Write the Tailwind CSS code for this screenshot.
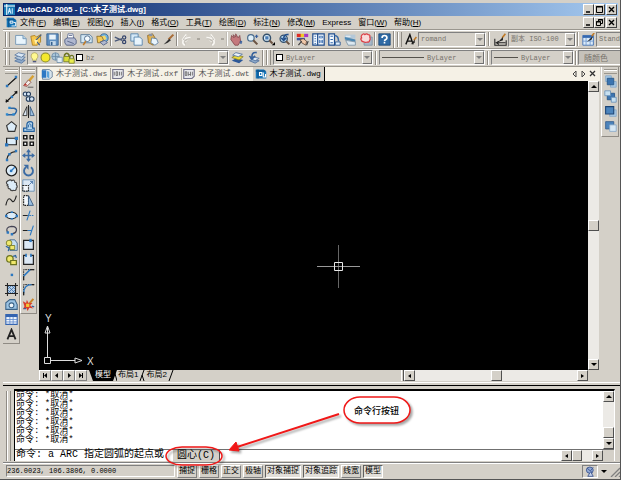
<!DOCTYPE html>
<html lang="zh-CN">
<head>
    <meta charset="UTF-8">
    <meta name="viewport" content="width=device-width, initial-scale=1.0">
    <title>AutoCAD 2005 - [C:\木子测试.dwg]</title>
    <script src="https://cdn.jsdelivr.net/npm/@tailwindcss/browser@4"></script>
</head>
<body class="flex flex-col h-screen min-h-[400px] overflow-hidden bg-[#d4d0c8] border-r border-b border-[#555] pt-[3px] pl-[3px] font-['Liberation_Sans','Noto_Sans_CJK_SC',sans-serif] text-[8px] leading-[10px] text-black">

<!-- Title bar -->
<header class="flex items-center h-[13px] mr-[2px] pl-[1px] pr-[1px] shrink-0 bg-linear-to-r from-[#0a246a] to-[#a6caf0] text-white">
    <svg class="w-[11px] h-[11px] mr-[2px]" viewBox="0 0 16 16"><rect width="16" height="16" fill="#1678b4"/><path d="M0 3h16M4 0v16" stroke="#fff" stroke-width="1.5"/><path d="M6 14l2-8 2 8M12 6v8M6 11h4" stroke="#cfeaff" stroke-width="1.5" fill="none"/></svg>
    <h1 class="font-bold whitespace-nowrap">AutoCAD 2005 - [C:\木子测试.dwg]</h1>
    <div class="flex ml-auto text-black">
        <button aria-label="最小化" class="flex w-[11px] h-[11px] bg-[#d4d0c8] border border-t-white border-l-white border-r-[#404040] border-b-[#404040]"><svg class="w-[9px] h-[9px]" viewBox="0 0 9 9"><path d="M2 7h4" stroke="#000" stroke-width="1.5"/></svg></button>
        <button aria-label="最大化" class="flex w-[11px] h-[11px] bg-[#d4d0c8] border border-t-white border-l-white border-r-[#404040] border-b-[#404040]"><svg class="w-[9px] h-[9px]" viewBox="0 0 9 9"><path d="M1.5 1.5h6v6h-6zM1 2h7" stroke="#000" fill="none"/></svg></button>
        <button aria-label="关闭" class="flex w-[11px] h-[11px] ml-[1px] bg-[#d4d0c8] border border-t-white border-l-white border-r-[#404040] border-b-[#404040]"><svg class="w-[9px] h-[9px]" viewBox="0 0 9 9"><path d="M2 2l5 5M7 2l-5 5" stroke="#000" stroke-width="1.4"/></svg></button>
    </div>
</header>

<!-- Menu -->
<nav class="flex items-center h-[13px] mr-[2px] pl-[3px] pr-[1px] shrink-0 whitespace-nowrap">
    <svg class="w-[11px] h-[11px] mr-[3px]" viewBox="0 0 16 16"><path d="M1 1h10l4 4v10H1z" fill="#1876b8"/><path d="M1 4h13M4 1v14" stroke="#064478"/><path d="M6 6h4v3H6zM11 8h3v5H8" stroke="#fff" fill="none" stroke-width="1.3"/></svg>
    <div class="flex gap-[7px]">
        <a href="#">文件(<u>F</u>)</a>
        <a href="#">编辑(<u>E</u>)</a>
        <a href="#">视图(<u>V</u>)</a>
        <a href="#">插入(<u>I</u>)</a>
        <a href="#">格式(<u>O</u>)</a>
        <a href="#">工具(<u>T</u>)</a>
        <a href="#">绘图(<u>D</u>)</a>
        <a href="#">标注(<u>N</u>)</a>
        <a href="#">修改(<u>M</u>)</a>
        <a href="#">Express</a>
        <a href="#">窗口(<u>W</u>)</a>
        <a href="#">帮助(<u>H</u>)</a>
    </div>
    <div class="flex ml-auto">
        <button aria-label="最小化图形" class="flex w-[11px] h-[11px] bg-[#d4d0c8] border border-t-white border-l-white border-r-[#404040] border-b-[#404040]"><svg class="w-[9px] h-[9px]" viewBox="0 0 9 9"><path d="M2 7h4" stroke="#000" stroke-width="1.5"/></svg></button>
        <button aria-label="还原图形" class="flex w-[11px] h-[11px] bg-[#d4d0c8] border border-t-white border-l-white border-r-[#404040] border-b-[#404040]"><svg class="w-[9px] h-[9px]" viewBox="0 0 9 9"><path d="M3.5 3V1.5h4v4H6M1.5 3.5h4v4h-4zM1 4h5M3 2h5" stroke="#000" fill="none"/></svg></button>
        <button aria-label="关闭图形" class="flex w-[11px] h-[11px] ml-[1px] bg-[#d4d0c8] border border-t-white border-l-white border-r-[#404040] border-b-[#404040]"><svg class="w-[9px] h-[9px]" viewBox="0 0 9 9"><path d="M2 2l5 5M7 2l-5 5" stroke="#000" stroke-width="1.4"/></svg></button>
    </div>
</nav>

<!-- Standard and styles toolbars -->
<div class="flex items-center h-[19px] shrink-0 overflow-hidden border-t border-[#9a968e] shadow-[inset_0_1px_0_#fff]">
    <span class="w-[5px] h-[15px] mx-[2px] shrink-0 border-x border-[#8f8b84] shadow-[inset_1px_0_0_#fff]"></span>
    <button aria-label="新建" class="flex w-4 shrink-0 justify-center"><svg class="w-[13px] h-[13px]" viewBox="0 0 16 16"><path d="M2 3h9l4 4v7H2z" fill="#e8f4fc" stroke="#6a8fb0"/><path d="M11 3v4h4" fill="#b8d4e8" stroke="#6a8fb0"/></svg></button>
    <button aria-label="打开" class="flex w-4 shrink-0 justify-center"><svg class="w-[13px] h-[13px]" viewBox="0 0 16 16"><path d="M1 4l5-1 2 2 5-3v9l-4 4H3z" fill="#f6c64c" stroke="#a87a1c"/><path d="M7 9l7-7M7 9l5 6" stroke="#44618a" stroke-width="1.5"/><path d="M5 8l5 1-3 5z" fill="#fff0a8"/></svg></button>
    <button aria-label="保存" class="flex w-4 shrink-0 justify-center"><svg class="w-[13px] h-[13px]" viewBox="0 0 16 16"><path d="M1 1h14v14H1z" fill="#5f8fc0" stroke="#34608f"/><path d="M4 2h8v6H4z" fill="#e8f2fa"/><path d="M5 10h7v5H5z" fill="#c4d8ea"/><path d="M6 11h2v4H6z" fill="#34608f"/></svg></button>
    <span class="w-[2px] h-[14px] shrink-0 border-l border-[#8f8b84] border-r border-r-white"></span>
    <button aria-label="打印" class="flex w-4 shrink-0 justify-center"><svg class="w-[13px] h-[13px]" viewBox="0 0 16 16"><path d="M4 7l1-6h6l1 6" fill="#fff" stroke="#5b6c92"/><path d="M1 8l3-2h9l2 3v4l-3 2H3l-2-3z" fill="#b0b8d0" stroke="#4b5a80"/><path d="M4 10l8 3M6 3h4" stroke="#4b5a80"/></svg></button>
    <button aria-label="打印预览" class="flex w-4 shrink-0 justify-center"><svg class="w-[13px] h-[13px]" viewBox="0 0 16 16"><path d="M1 2h11l3 3v7H1z" fill="#d5e8f4" stroke="#4d7294"/><circle cx="9" cy="7" r="3.5" fill="#f4fbff" stroke="#3c5a7c"/><path d="M7 10l-3 5" stroke="#c07b2a" stroke-width="2"/></svg></button>
    <button aria-label="发布" class="flex w-4 shrink-0 justify-center"><svg class="w-[13px] h-[13px]" viewBox="0 0 16 16"><circle cx="10" cy="6" r="5" fill="#72b4e2" stroke="#32618c"/><path d="M7 4l4-1 2 4-3 2z" fill="#f2d868"/><path d="M1 4h6l2 4-2 4H2z" fill="#f2c958" stroke="#8c6a24"/><path d="M5 11l6-2 3 3-5 3z" fill="#b0b8d0" stroke="#4b5a80"/></svg></button>
    <span class="w-[2px] h-[14px] shrink-0 border-l border-[#8f8b84] border-r border-r-white"></span>
    <button aria-label="剪切" class="flex w-4 shrink-0 justify-center"><svg class="w-[13px] h-[13px]" viewBox="0 0 16 16"><path d="M1 5l9 4M1 10l9-3" stroke="#4a5878" stroke-width="1.6"/><circle cx="12.5" cy="5.5" r="2" fill="none" stroke="#34446c" stroke-width="1.5"/><circle cx="12.5" cy="11" r="2" fill="none" stroke="#34446c" stroke-width="1.5"/></svg></button>
    <button aria-label="复制" class="flex w-4 shrink-0 justify-center"><svg class="w-[13px] h-[13px]" viewBox="0 0 16 16"><path d="M1 1h9v9H1z" fill="#d4e8f6" stroke="#4b7ca8"/><path d="M5 5h7l3 3v7H5z" fill="#e8f4fc" stroke="#4b7ca8"/></svg></button>
    <button aria-label="粘贴" class="flex w-4 shrink-0 justify-center"><svg class="w-[13px] h-[13px]" viewBox="0 0 16 16"><path d="M2 3l6-2 5 8-4 6-6-3z" fill="#e6b450" stroke="#8c6420"/><path d="M4 1h4v3H4z" fill="#8894a8"/><path d="M7 6l6 1 2 5-4 3-5-3z" fill="#e8f4fc" stroke="#5a7ca0"/></svg></button>
    <button aria-label="特性匹配" class="flex w-4 shrink-0 justify-center"><svg class="w-[13px] h-[13px]" viewBox="0 0 16 16"><path d="M14 2L8 8" stroke="#a86c38" stroke-width="2.5"/><path d="M9 7L2 14l5-2 4-3z" fill="#303030"/></svg></button>
    <span class="w-[2px] h-[14px] shrink-0 border-l border-[#8f8b84] border-r border-r-white"></span>
    <button aria-label="放弃" class="flex w-4 shrink-0 justify-center"><svg class="w-[13px] h-[13px]" viewBox="0 0 16 16"><path d="M6 15C1 11 5 6 13 6M3 9l5-7M3 8l6 2" fill="none" stroke="#f8f6f2" stroke-width="2.5"/><path d="M7 14C3 11 6 7 13 7M8 3L4 8l5 2" fill="none" stroke="#b4b0a8"/></svg></button>
    <span class="flex w-2 shrink-0 justify-center"><span class="w-[3px] h-[2px] bg-[#aaa69e]"></span></span>
    <button aria-label="重做" class="flex w-4 shrink-0 justify-center"><svg class="w-[13px] h-[13px]" viewBox="0 0 16 16"><path d="M10 15c5-4 1-9-7-9M13 9L8 2M13 8l-6 2" fill="none" stroke="#f8f6f2" stroke-width="2.5"/><path d="M9 14c4-3 1-7-6-7M8 3l4 5-5 2" fill="none" stroke="#b4b0a8"/></svg></button>
    <span class="flex w-2 shrink-0 justify-center"><span class="w-[3px] h-[2px] bg-[#aaa69e]"></span></span>
    <span class="w-[2px] h-[14px] shrink-0 border-l border-[#c0bcb4] border-r border-r-white"></span>
    <button aria-label="实时平移" class="flex w-4 shrink-0 justify-center"><svg class="w-[13px] h-[13px]" viewBox="0 0 16 16"><path d="M2 3l3 3-1-4 3 3V1l3 5 2-3 1 7-3 5H6L1 8z" fill="#c4787c" stroke="#84484c"/><path d="M12 11h3M13.5 9.5v4" stroke="#335c9c" stroke-width="1.5"/></svg></button>
    <button aria-label="实时缩放" class="flex w-4 shrink-0 justify-center"><svg class="w-[13px] h-[13px]" viewBox="0 0 16 16"><circle cx="6" cy="6" r="4" fill="#e0f0fa" stroke="#4b6c8c" stroke-width="1.5"/><path d="M9 9l5 5" stroke="#6b5444" stroke-width="2.5"/><path d="M11 4h4M13 2v4" stroke="#335c9c" stroke-width="1.5"/></svg></button>
    <button aria-label="窗口缩放" class="flex w-4 shrink-0 justify-center"><svg class="w-[13px] h-[13px]" viewBox="0 0 16 16"><circle cx="6" cy="6" r="4.5" fill="#e0f0fa" stroke="#34506c" stroke-width="1.8"/><path d="M4 4h4v4H4z" fill="#4a7cb4"/><path d="M9 9l4 4" stroke="#6b5444" stroke-width="2.5"/><path d="M12 15h4v-4z" fill="#000"/></svg></button>
    <button aria-label="缩放上一个" class="flex w-4 shrink-0 justify-center"><svg class="w-[13px] h-[13px]" viewBox="0 0 16 16"><circle cx="7" cy="7" r="4.5" fill="#b8d8f0" stroke="#34506c" stroke-width="1.5"/><path d="M13 2C9 1 7 4 7 7M4 6l3 3 3-3" fill="none" stroke="#24508c" stroke-width="2"/><path d="M10 10l4 4" stroke="#6b5444" stroke-width="2.5"/></svg></button>
    <span class="w-[2px] h-[14px] shrink-0 border-l border-[#8f8b84] border-r border-r-white"></span>
    <button aria-label="特性" class="flex w-4 shrink-0 justify-center"><svg class="w-[13px] h-[13px]" viewBox="0 0 16 16"><path d="M1 1h5v4H1z" fill="#e02c24"/><path d="M6 1h4v4H6z" fill="#f0c828"/><path d="M10 1h5v4h-5z" fill="#a838c4"/><path d="M1 6h10v3H1z" fill="#3c58a0"/><path d="M5 8l4-1 4 3-1 5-5-3z" fill="#f0c8a8" stroke="#5c4438"/><path d="M3 15l4-5M13 15l2-5" stroke="#444" stroke-width="1.5"/></svg></button>
    <button aria-label="设计中心" class="flex w-4 shrink-0 justify-center"><svg class="w-[13px] h-[13px]" viewBox="0 0 16 16"><path d="M1 1h14v14H1z" fill="#f4faff" stroke="#1e4c8c" stroke-width="1.5"/><path d="M7 1v14" stroke="#1e4c8c" stroke-width="1.5"/><path d="M3 4h2M3 7h2M3 10h2M3 13h2M9 4h4v2H9zM9 9h1v3H9zM12 9h1v3h-1z" stroke="#2c64ac" fill="none"/></svg></button>
    <button aria-label="工具选项板" class="flex w-4 shrink-0 justify-center"><svg class="w-[13px] h-[13px]" viewBox="0 0 16 16"><path d="M1 1h7v14H1z" fill="#f4faff" stroke="#1e4c8c" stroke-width="1.5"/><path d="M3 4h3M3 8h3M3 12h3" stroke="#2c64ac" stroke-width="1.5"/><path d="M8 3c4 0 5 3 5 7" stroke="#3c6ca8" stroke-width="2" fill="none"/><path d="M9 11h6v4H9z" fill="#e0eef8" stroke="#1e4c8c"/></svg></button>
    <button aria-label="图纸集管理器" class="flex w-4 shrink-0 justify-center"><svg class="w-[13px] h-[13px]" viewBox="0 0 16 16"><path d="M1 2h13v5H1z" fill="#b4c8d8"/><path d="M1 5l13 3v3L1 8z" fill="#4c88b4"/><path d="M2 9l12 2v4H5z" fill="#dce8f0" stroke="#7890a4"/><path d="M2 4h6" stroke="#fff"/></svg></button>
    <button aria-label="标记集管理器" class="flex w-4 shrink-0 justify-center"><svg class="w-[13px] h-[13px]" viewBox="0 0 16 16"><path d="M5 5h10v10H5z" fill="#a8b8c8" stroke="#7890a4"/><path d="M2 3q2-3 4-1 2-2 4 0 3 0 2 3 1 2 0 4-1 3-3 2-2 1-4 0-3 0-3-2-2-2 0-3-1-2 0-3z" fill="#f8dcdc" stroke="#dc3c44" stroke-width="1.5"/></svg></button>
    <span class="w-[2px] h-[14px] shrink-0 border-l border-[#8f8b84] border-r border-r-white"></span>
    <button aria-label="帮助" class="flex w-4 shrink-0 justify-center"><svg class="w-[13px] h-[13px]" viewBox="0 0 16 16"><path d="M1 1h14v14H1z" fill="#2f6aa4" stroke="#1b4674"/><path d="M5 6c0-4 6-4 6 0 0 2-3 2-3 4M8 11v2" fill="none" stroke="#fff" stroke-width="2"/></svg></button>
    <span class="w-[2px] h-[17px] ml-[1px] shrink-0 border-l border-[#8f8b84] border-r border-r-white"></span>
    <span class="w-[5px] h-[15px] mx-[2px] shrink-0 border-x border-[#8f8b84] shadow-[inset_1px_0_0_#fff]"></span>
    <button aria-label="文字样式" class="flex w-[14px] shrink-0 justify-center"><svg class="w-[13px] h-[13px]" viewBox="0 0 16 16"><path d="M1 14L6 2l4 12M3 10h6" stroke="#111" stroke-width="1.7" fill="none"/><path d="M14 5l-3 4" stroke="#c07b2a" stroke-width="2"/><path d="M12 8l-5 6 5-2z" fill="#222"/></svg></button>
    <label class="flex w-[68px] h-[15px] shrink-0 border border-t-[#808080] border-l-[#808080] border-r-white border-b-white pl-[2px]">
        <select aria-label="文字样式控制" class="appearance-none flex-1 min-w-0 font-['Liberation_Mono','Noto_Sans_CJK_SC',monospace] text-[7px] text-[#77736c]"><option>romand</option></select>
        <span class="flex items-center justify-center w-[10px] pointer-events-none border border-t-white border-l-white border-r-[#707070] border-b-[#707070]"><span class="border-x-[3px] border-t-[3px] border-x-transparent border-t-[#808080]"></span></span>
    </label>
    <span class="w-[2px] h-[14px] mx-[2px] shrink-0 border-l border-[#8f8b84] border-r border-r-white"></span>
    <button aria-label="标注样式" class="flex w-4 shrink-0 justify-center"><svg class="w-[13px] h-[13px]" viewBox="0 0 16 16"><path d="M1 7v8h14V9M2 12h12M3 12l3-2M3 12l3 2" stroke="#222" stroke-width="1.3" fill="none"/><path d="M14 1l-4 5" stroke="#c07b2a" stroke-width="2"/><path d="M11 5l-6 6 6-2z" fill="#222"/></svg></button>
    <label class="flex w-[68px] h-[15px] shrink-0 border border-t-[#808080] border-l-[#808080] border-r-white border-b-white pl-[2px]">
        <select aria-label="标注样式控制" class="appearance-none flex-1 min-w-0 font-['Liberation_Mono','Noto_Sans_CJK_SC',monospace] text-[7px] text-[#77736c]"><option>副本 ISO-100</option></select>
        <span class="flex items-center justify-center w-[10px] pointer-events-none border border-t-white border-l-white border-r-[#707070] border-b-[#707070]"><span class="border-x-[3px] border-t-[3px] border-x-transparent border-t-[#808080]"></span></span>
    </label>
    <span class="w-[2px] h-[14px] mx-[1px] shrink-0 border-l border-[#8f8b84] border-r border-r-white"></span>
    <button aria-label="表格样式" class="flex w-4 shrink-0 justify-center"><svg class="w-[13px] h-[13px]" viewBox="0 0 16 16"><path d="M1 3h13v12H1z" fill="#dcebf8" stroke="#3468b0"/><path d="M1 3h13v3H1z" fill="#3468b0"/><path d="M1 10h13M5 6v9M10 6v9" stroke="#6c98d0"/><path d="M15 0l-3 4" stroke="#c07b2a" stroke-width="2"/><path d="M13 4l-7 7 6-3z" fill="#222"/></svg></button>
    <label class="flex flex-1 min-w-[66px] h-[15px] border border-t-[#808080] border-l-[#808080] border-r-white border-b-white pl-[2px]">
        <select aria-label="表格样式控制" class="appearance-none flex-1 min-w-0 font-['Liberation_Mono','Noto_Sans_CJK_SC',monospace] text-[7px] text-[#77736c]"><option>Standard</option></select>
        <span class="flex items-center justify-center w-[10px] pointer-events-none border border-t-white border-l-white border-r-[#707070] border-b-[#707070]"><span class="border-x-[3px] border-t-[3px] border-x-transparent border-t-[#808080]"></span></span>
    </label>
</div>

<!-- Layers and properties toolbars -->
<div class="flex items-center h-[18px] shrink-0 overflow-hidden border-t border-[#9a968e] shadow-[inset_0_1px_0_#fff]">
    <span class="w-[5px] h-[15px] mx-[2px] shrink-0 border-x border-[#8f8b84] shadow-[inset_1px_0_0_#fff]"></span>
    <button aria-label="图层特性管理器" class="flex w-[15px] shrink-0 justify-center"><svg class="w-[12px] h-[12px]" viewBox="0 0 16 16"><path d="M1 12l5-3 9 2-5 4z" fill="#8ca8c8" stroke="#50709c"/><path d="M1 8l5-3 9 2-5 4z" fill="#b4c8dc" stroke="#50709c"/><path d="M1 4l5-3 9 2-5 4z" fill="#dce8f4" stroke="#50709c"/></svg></button>
    <label class="flex items-center w-[202px] h-[15px] shrink-0 border border-t-[#808080] border-l-[#808080] border-r-white border-b-white pl-[1px]">
        <svg class="w-[11px] h-[11px]" viewBox="0 0 16 16"><path d="M8 1a5 5 0 0 0-3 9v2h6v-2a5 5 0 0 0-3-9z" fill="#fff890" stroke="#a49c50"/><path d="M5.5 13h5v2h-5z" fill="#505880"/></svg>
        <svg class="w-[11px] h-[11px]" viewBox="0 0 16 16"><circle cx="8" cy="8" r="6.5" fill="#f4e82c" stroke="#8c8c28" stroke-width="1.5"/></svg>
        <svg class="w-[12px] h-[12px]" viewBox="0 0 16 16"><circle cx="6" cy="6" r="5" fill="#a8c4d8" stroke="#6888a4"/><path d="M8 7h7v7H8z" fill="#e0ecf4" stroke="#6888a4"/><path d="M1 6h10M6 1v10" stroke="#6888a4"/></svg>
        <svg class="w-[12px] h-[12px]" viewBox="0 0 16 16"><path d="M2 6V4q3-5 6 0v3" fill="none" stroke="#6c7420" stroke-width="2"/><path d="M1 6h8v7H1z" fill="#d8dc38" stroke="#6c7420"/><path d="M9 8V6q3-3 5 0v3" fill="none" stroke="#6c7420" stroke-width="1.5"/><path d="M8 9h7v6H8z" fill="#e8ec50" stroke="#6c7420"/></svg>
        <span class="w-[7px] h-[7px] ml-[1px] bg-white border border-black"></span>
        <select aria-label="图层控制" class="appearance-none flex-1 min-w-0 ml-[3px] font-['Liberation_Mono',monospace] text-[7px] text-[#77736c]"><option>bz</option></select>
        <span class="flex items-center justify-center w-[10px] h-full pointer-events-none border border-t-white border-l-white border-r-[#707070] border-b-[#707070]"><span class="border-x-[3px] border-t-[3px] border-x-transparent border-t-[#808080]"></span></span>
    </label>
    <button aria-label="将对象的图层置为当前" class="flex w-4 shrink-0 justify-center"><svg class="w-[13px] h-[13px]" viewBox="0 0 16 16"><path d="M1 12l5-3 9 2-5 4z" fill="#2c5898"/><path d="M1 8l5-3 9 2-5 4z" fill="#ecdc3c" stroke="#88802c"/><path d="M2 5l4-3 8 2-5 3z" fill="#e8f0f8" stroke="#50709c"/></svg></button>
    <button aria-label="上一个图层" class="flex w-4 shrink-0 justify-center"><svg class="w-[13px] h-[13px]" viewBox="0 0 16 16"><path d="M3 12l4-2 8 2-5 3z" fill="#8ca8c8" stroke="#50709c"/><path d="M4 9l3-2 8 2-5 3z" fill="#dce8f4" stroke="#50709c"/><path d="M12 2C7 1 6 4 6 8M3 6l3 4 4-4" fill="none" stroke="#34609c" stroke-width="2"/></svg></button>
    <span class="w-[2px] h-[16px] ml-[1px] shrink-0 border-l border-[#8f8b84] border-r border-r-white"></span>
    <span class="w-[5px] h-[15px] mx-[2px] shrink-0 border-x border-[#8f8b84] shadow-[inset_1px_0_0_#fff]"></span>
    <label class="flex items-center w-[100px] h-[15px] shrink-0 border border-t-[#808080] border-l-[#808080] border-r-white border-b-white pl-[2px]">
        <span class="w-[7px] h-[7px] bg-white border border-black"></span>
        <select aria-label="颜色控制" class="appearance-none flex-1 min-w-0 ml-[3px] font-['Liberation_Mono',monospace] text-[7px] text-[#77736c]"><option>ByLayer</option></select>
        <span class="flex items-center justify-center w-[10px] h-full pointer-events-none border border-t-white border-l-white border-r-[#707070] border-b-[#707070]"><span class="border-x-[3px] border-t-[3px] border-x-transparent border-t-[#808080]"></span></span>
    </label>
    <span class="w-[2px] h-[14px] mx-[2px] shrink-0 border-l border-[#8f8b84] border-r border-r-white"></span>
    <label class="flex items-center w-[106px] h-[15px] shrink-0 border border-t-[#808080] border-l-[#808080] border-r-white border-b-white pl-[2px]">
        <span class="w-[42px] h-px bg-[#55524c]"></span>
        <select aria-label="线型控制" class="appearance-none flex-1 min-w-0 ml-[3px] font-['Liberation_Mono',monospace] text-[7px] text-[#77736c]"><option>ByLayer</option></select>
        <span class="flex items-center justify-center w-[10px] h-full pointer-events-none border border-t-white border-l-white border-r-[#707070] border-b-[#707070]"><span class="border-x-[3px] border-t-[3px] border-x-transparent border-t-[#808080]"></span></span>
    </label>
    <span class="w-[2px] h-[14px] mx-[2px] shrink-0 border-l border-[#8f8b84] border-r border-r-white"></span>
    <label class="flex items-center w-[83px] h-[15px] shrink-0 border border-t-[#808080] border-l-[#808080] border-r-white border-b-white pl-[2px]">
        <span class="w-[24px] h-px bg-[#55524c]"></span>
        <select aria-label="线宽控制" class="appearance-none flex-1 min-w-0 ml-[3px] font-['Liberation_Mono',monospace] text-[7px] text-[#77736c]"><option>ByLayer</option></select>
        <span class="flex items-center justify-center w-[10px] h-full pointer-events-none border border-t-white border-l-white border-r-[#707070] border-b-[#707070]"><span class="border-x-[3px] border-t-[3px] border-x-transparent border-t-[#808080]"></span></span>
    </label>
    <span class="w-[2px] h-[14px] mx-[1px] shrink-0 border-l border-[#8f8b84] border-r border-r-white"></span>
    <label class="flex flex-1 min-w-[80px] h-[15px] bg-[#c6c2ba] border border-t-[#808080] border-l-[#808080] border-r-white border-b-white pl-[5px]">
        <select aria-label="打印样式控制" disabled class="appearance-none flex-1 min-w-0 font-['Noto_Sans_CJK_SC',sans-serif] text-[#77736c] opacity-100"><option>随颜色</option></select>
    </label>
</div>

<!-- Work area -->
<main class="flex flex-1 min-h-0 border-t border-[#9a968e]">
    <!-- Draw -->
    <div class="flex flex-col items-center w-[17px] shrink-0 self-start border-r border-b border-[#8f8b84] pt-[2px] pb-[2px]">
        <span class="w-[13px] h-[5px] mb-[1px] border-y border-[#9a968e] shadow-[inset_0_1px_0_#fff]"></span>
        <div class="flex flex-col justify-between items-center h-[266px]">
            <button aria-label="直线" class="flex"><svg class="w-[13px] h-[13px]" viewBox="0 0 16 16"><path d="M2 14L14 3" stroke="#111" stroke-width="1.5"/><path d="M1 12h3v3H1zM12 1h3v3h-3z" fill="#2c78c0"/></svg></button>
            <button aria-label="构造线" class="flex"><svg class="w-[13px] h-[13px]" viewBox="0 0 16 16"><path d="M1 15L15 2" stroke="#111" stroke-width="1.5"/><path d="M1 15v-4l4 3zM15 1v4l-4-3z" fill="#111"/><path d="M7 7h3v3H7z" fill="#2c78c0"/></svg></button>
            <button aria-label="多段线" class="flex"><svg class="w-[13px] h-[13px]" viewBox="0 0 16 16"><path d="M6 4h5q4 1 3 4t-3 4H2" fill="none" stroke="#2c64a0" stroke-width="1.8"/><path d="M4 2h3v3H4zM1 10h3v3H1zM9 10h3v3H9z" fill="#2c88d0"/></svg></button>
            <button aria-label="正多边形" class="flex"><svg class="w-[13px] h-[13px]" viewBox="0 0 16 16"><path d="M8 2l6 5-2 7H4L2 7z" fill="#dcecf8" stroke="#333" stroke-width="1.4"/></svg></button>
            <button aria-label="矩形" class="flex"><svg class="w-[13px] h-[13px]" viewBox="0 0 16 16"><path d="M2 4h12v8H2z" fill="#dcecf8" stroke="#222" stroke-width="1.5"/><path d="M0 10h4v4H0zM12 2h4v4h-4z" fill="#2c78c0"/></svg></button>
            <button aria-label="圆弧" class="flex"><svg class="w-[13px] h-[13px]" viewBox="0 0 16 16"><path d="M2 14Q3 4 14 3" fill="none" stroke="#222" stroke-width="1.5"/><path d="M1 12h3v3H1zM4 5h3v3H4zM12 1h3v3h-3z" fill="#2c78c0"/></svg></button>
            <button aria-label="圆" class="flex"><svg class="w-[13px] h-[13px]" viewBox="0 0 16 16"><circle cx="8" cy="8" r="6.5" fill="#dcecf8" stroke="#222" stroke-width="1.5"/><path d="M8 8l4-4" stroke="#2c78c0" stroke-width="1.5"/><path d="M6 7h3v3H6z" fill="#2c78c0"/></svg></button>
            <button aria-label="修订云线" class="flex"><svg class="w-[13px] h-[13px]" viewBox="0 0 16 16"><path d="M3 7Q0 4 4 2q3-2 4 0 4-2 4 2 3 0 2 3 2 3 0 4 0 4-4 3-3 1-4-2-3 0-2-3-3-1 0-2z" fill="#dcecf8" stroke="#444" stroke-width="1.4"/></svg></button>
            <button aria-label="样条曲线" class="flex"><svg class="w-[13px] h-[13px]" viewBox="0 0 16 16"><path d="M1 14C4 0 8 8 9 9s3 1 5-7" fill="none" stroke="#222" stroke-width="1.4"/></svg></button>
            <button aria-label="椭圆" class="flex"><svg class="w-[13px] h-[13px]" viewBox="0 0 16 16"><ellipse cx="8" cy="8" rx="6.5" ry="4" fill="#dcecf8" stroke="#222" stroke-width="1.4"/><path d="M0 7h3v3H0zM13 7h3v3h-3zM7 3h3v2H7zM7 11h3v2H7z" fill="#2c78c0"/></svg></button>
            <button aria-label="椭圆弧" class="flex"><svg class="w-[13px] h-[13px]" viewBox="0 0 16 16"><path d="M3 10Q0 4 8 3q7 0 6 5-1 4-6 4" fill="none" stroke="#445" stroke-width="1.5"/><path d="M2 9h3v3H2zM7 11h3v3H7z" fill="#2c78c0"/></svg></button>
            <button aria-label="插入块" class="flex"><svg class="w-[13px] h-[13px]" viewBox="0 0 16 16"><path d="M6 1h6l3 4v9H6z" fill="#c8e0f0" stroke="#345c84"/><circle cx="5" cy="5" r="3.5" fill="#f0e86c" stroke="#6c7420"/><path d="M6 8h6v5H6z" fill="#f0e86c" stroke="#6c7420"/><path d="M1 9l4 2-1 4" stroke="#2c64a0" fill="none" stroke-width="1.5"/></svg></button>
            <button aria-label="创建块" class="flex"><svg class="w-[13px] h-[13px]" viewBox="0 0 16 16"><circle cx="6" cy="6" r="4" fill="#f0e86c" stroke="#6c7420" stroke-width="1.5"/><path d="M7 8h7v5H7z" fill="#f0e86c" stroke="#6c7420" stroke-width="1.5"/><path d="M10 3l3-1 1 3" stroke="#2c64a0" fill="none" stroke-width="1.5"/></svg></button>
            <button aria-label="点" class="flex"><svg class="w-[13px] h-[13px]" viewBox="0 0 16 16"><path d="M7 7h3v3H7z" fill="#2c78c0"/></svg></button>
            <button aria-label="图案填充" class="flex"><svg class="w-[13px] h-[13px]" viewBox="0 0 16 16"><path d="M3 3h10v10H3z" fill="#b8d0e8"/><path d="M3 8l5-5M3 13L13 3M8 13l5-5M3 8l5 5M3 3l10 10M8 3l5 5" stroke="#3c6ca4"/><path d="M3 0v16M13 0v16M0 3h16M0 13h16" stroke="#222" stroke-width="1.3"/></svg></button>
            <button aria-label="面域" class="flex"><svg class="w-[13px] h-[13px]" viewBox="0 0 16 16"><path d="M1 14V6l5-4h6l3 6v6z" fill="#9cc4e4" stroke="#3c6488" stroke-width="1.3"/><circle cx="8" cy="9" r="3" fill="#f0f8fc" stroke="#3c6488" stroke-width="1.3"/></svg></button>
            <button aria-label="表格" class="flex"><svg class="w-[13px] h-[13px]" viewBox="0 0 16 16"><path d="M1 2h14v12H1z" fill="#f0f6fc" stroke="#3464b0" stroke-width="1.3"/><path d="M1 2h14v3H1z" fill="#3464b0"/><path d="M1 8h14M1 11h14M6 5v9M10 5v9" stroke="#5c88cc"/></svg></button>
            <button aria-label="多行文字" class="flex"><svg class="w-[13px] h-[13px]" viewBox="0 0 16 16"><path d="M3 14L8 2l5 12M5 10h6" fill="none" stroke="#222" stroke-width="2.2"/></svg></button>
        </div>
    </div>
    <!-- Modify -->
    <div class="flex flex-col items-center w-[17px] mr-[1px] shrink-0 self-start border-l border-l-white border-r border-b border-[#8f8b84] pt-[2px] pb-[2px]">
        <span class="w-[13px] h-[5px] mb-[1px] border-y border-[#9a968e] shadow-[inset_0_1px_0_#fff]"></span>
        <div class="flex flex-col justify-between items-center h-[236px]">
            <button aria-label="删除" class="flex"><svg class="w-[13px] h-[13px]" viewBox="0 0 16 16"><path d="M14 1L8 8" stroke="#d8a030" stroke-width="3"/><path d="M8 6l3 3-5 5-4-1z" fill="#f4ece8" stroke="#804840"/><path d="M2 13l2-3 3 3z" fill="#c43c34"/><path d="M7 15h7" stroke="#444"/></svg></button>
            <button aria-label="复制对象" class="flex"><svg class="w-[13px] h-[13px]" viewBox="0 0 16 16"><circle cx="4" cy="5" r="2.5" fill="#d4e4f4" stroke="#223c5c" stroke-width="1.3"/><circle cx="8" cy="5" r="2.5" fill="#d4e4f4" stroke="#223c5c" stroke-width="1.3"/><circle cx="8" cy="11" r="2.8" fill="#d4e4f4" stroke="#223c5c" stroke-width="1.3"/><circle cx="12" cy="11" r="2.8" fill="#d4e4f4" stroke="#223c5c" stroke-width="1.3"/></svg></button>
            <button aria-label="镜像" class="flex"><svg class="w-[13px] h-[13px]" viewBox="0 0 16 16"><path d="M6 2v11H1z" fill="#dce8f4" stroke="#222"/><path d="M10 2v11h5z" fill="#9cc0e0" stroke="#2c5078"/><path d="M8 0v16" stroke="#222" stroke-width="1.3"/></svg></button>
            <button aria-label="偏移" class="flex"><svg class="w-[13px] h-[13px]" viewBox="0 0 16 16"><path d="M2 14v-4h4V6q0-4 4-4t3 4v4h2v4z" fill="#b8d8f0" stroke="#24609c" stroke-width="1.5"/><path d="M5 12h8M8 9V6q2-3 3 0v3" fill="none" stroke="#24609c"/></svg></button>
            <button aria-label="阵列" class="flex"><svg class="w-[13px] h-[13px]" viewBox="0 0 16 16"><path d="M2 2h4v4H2zM10 2h4v4h-4zM2 10h4v4H2zM10 10h4v4h-4z" fill="#fff" stroke="#111" stroke-width="1.7"/></svg></button>
            <button aria-label="移动" class="flex"><svg class="w-[13px] h-[13px]" viewBox="0 0 16 16"><path d="M8 2v12M2 8h12" stroke="#3c6ca4" stroke-width="2"/><path d="M8 0l3 4H5zM8 16l3-4H5zM0 8l4-3v6zM16 8l-4-3v6z" fill="#3c6ca4"/></svg></button>
            <button aria-label="旋转" class="flex"><svg class="w-[13px] h-[13px]" viewBox="0 0 16 16"><path d="M5 4a5.5 5.5 0 1 0 6 0" fill="none" stroke="#3c6ca4" stroke-width="2.3"/><path d="M2 1h6v6z" fill="#3c6ca4"/></svg></button>
            <button aria-label="缩放" class="flex"><svg class="w-[13px] h-[13px]" viewBox="0 0 16 16"><path d="M1 1h14v14H1z" fill="#dce8f4" stroke="#5c88b0"/><path d="M1 8h7v7H1z" fill="#f4f8fc" stroke="#222" stroke-width="1.4" stroke-dasharray="2 1"/><path d="M9 7l4-4M10 3h3v3" stroke="#3c6ca4" fill="none"/></svg></button>
            <button aria-label="拉伸" class="flex"><svg class="w-[13px] h-[13px]" viewBox="0 0 16 16"><path d="M2 2h6v12H2z" fill="#f4f8fc" stroke="#222" stroke-width="1.4" stroke-dasharray="2 1"/><path d="M8 2l6 12H8z" fill="#9cc0e0" stroke="#2c5078"/></svg></button>
            <button aria-label="修剪" class="flex"><svg class="w-[13px] h-[13px]" viewBox="0 0 16 16"><path d="M10 2L6 14" stroke="#2c78c0" stroke-width="1.4"/><path d="M1 8h6" stroke="#222" stroke-width="1.3"/><path d="M9 8h6" stroke="#2c78c0" stroke-width="1.3" stroke-dasharray="2 1"/></svg></button>
            <button aria-label="延伸" class="flex"><svg class="w-[13px] h-[13px]" viewBox="0 0 16 16"><path d="M14 2l-4 12" stroke="#2c78c0" stroke-width="1.4"/><path d="M1 8h6" stroke="#222" stroke-width="1.3"/><path d="M7 8h5" stroke="#2c78c0" stroke-width="1.3"/></svg></button>
            <button aria-label="打断于点" class="flex"><svg class="w-[13px] h-[13px]" viewBox="0 0 16 16"><path d="M2 3h12v11H2z" fill="#dce8f4" stroke="#222" stroke-width="1.5"/><path d="M9 1h3v4H9z" fill="#2c78c0"/></svg></button>
            <button aria-label="打断" class="flex"><svg class="w-[13px] h-[13px]" viewBox="0 0 16 16"><path d="M2 3h12v11H2z" fill="#dce8f4"/><path d="M5 3H2v11h12V3h-3" fill="none" stroke="#222" stroke-width="1.5"/><path d="M4 1h2v4H4zM10 1h2v4h-2z" fill="#2c78c0"/></svg></button>
            <button aria-label="倒角" class="flex"><svg class="w-[13px] h-[13px]" viewBox="0 0 16 16"><path d="M2 15V2h13" stroke="#222" stroke-width="1.2" stroke-dasharray="2 1" fill="none"/><path d="M2 10l8-8" stroke="#2c78c0" stroke-width="1.8"/><path d="M2 15v-5M10 2h5" stroke="#222" stroke-width="1.5"/></svg></button>
            <button aria-label="圆角" class="flex"><svg class="w-[13px] h-[13px]" viewBox="0 0 16 16"><path d="M2 15V2h13" stroke="#222" stroke-width="1.2" stroke-dasharray="2 1" fill="none"/><path d="M2 13Q2 2 12 2" stroke="#2c78c0" stroke-width="1.8" fill="none"/><path d="M2 15v-4M12 2h3" stroke="#222" stroke-width="1.5"/></svg></button>
            <button aria-label="分解" class="flex"><svg class="w-[13px] h-[13px]" viewBox="0 0 16 16"><path d="M14 1l-5 6" stroke="#c88428" stroke-width="2.5"/><path d="M1 4l4 2 1-4 2 4 5 0-3 3 4 4-5-1-2 4-2-4-4 2 2-4z" fill="#d83c2c"/><path d="M5 7l4 0 0 4-4 0z" fill="#f4c838"/><path d="M2 13h3M12 10l3 1" stroke="#3c5c9c" stroke-width="1.5"/></svg></button>
        </div>
    </div>

    <div class="flex flex-col flex-1 min-w-0">
        <!-- File tabs -->
        <div class="flex items-center h-[14px] shrink-0 bg-[#f5f1e6] pl-[3px] pr-[3px] font-['Liberation_Mono','Noto_Sans_CJK_SC',monospace] text-[#555]">
            <a href="#" class="flex items-center gap-[3px] pr-[3px] whitespace-nowrap border-r border-[#aaa69e]"><svg class="w-[12px] h-[12px]" viewBox="0 0 16 16"><path d="M2 2h9l4 3v7l-4 3H2z" fill="#d8e4ec" stroke="#58708c"/><path d="M1 3h6v10H1z" fill="#2c78c4"/><path d="M8 4v8l3 2V5z" fill="#5ca4dc"/></svg>木子测试.dws</a>
            <a href="#" class="flex items-center gap-[3px] pl-[1px] pr-[3px] whitespace-nowrap border-r border-[#aaa69e]"><svg class="w-[12px] h-[12px]" viewBox="0 0 16 16"><path d="M1 2h14v9l-3 3H1z" fill="#e8e8ec" stroke="#74748c" stroke-width="1.5"/><path d="M3 5v5M5.5 5h2v5h-2zM10 5v5M12.5 5v5" stroke="#555" fill="none"/></svg>木子测试.dxf</a>
            <a href="#" class="flex items-center gap-[3px] pl-[1px] pr-[3px] whitespace-nowrap"><svg class="w-[12px] h-[12px]" viewBox="0 0 16 16"><path d="M1 2h14v9l-3 3H1z" fill="#e8e8ec" stroke="#74748c" stroke-width="1.5"/><path d="M3 5v5h2V5zM7 5v5l1.5-2L10 10V5M12.5 5v5" stroke="#555" fill="none"/></svg>木子测试.dwt</a>
            <a href="#" class="flex items-center gap-[3px] h-full pl-[2px] pr-[3px] whitespace-nowrap bg-[#d4d0c8] border-r border-black text-black"><svg class="w-[12px] h-[12px]" viewBox="0 0 16 16"><path d="M1 2h11l3 3v9H1z" fill="#1876b8"/><path d="M1 4h13M4 2v12" stroke="#064478"/><path d="M6 6h3v4H6zM11 6v6h3V8" stroke="#fff" fill="none" stroke-width="1.4"/></svg>木子测试.dwg</a>
            <div class="flex ml-auto gap-[2px]">
                <button aria-label="上一个标签"><svg class="w-[7px] h-[8px]" viewBox="0 0 7 8"><path d="M5 1v6L2 4z" fill="none" stroke="#444"/></svg></button>
                <button aria-label="下一个标签"><svg class="w-[7px] h-[8px]" viewBox="0 0 7 8"><path d="M2 1v6l3-3z" fill="none" stroke="#444"/></svg></button>
                <button aria-label="关闭标签"><svg class="w-[8px] h-[8px]" viewBox="0 0 8 8"><path d="M1 1l5 5M6 1L1 6" stroke="#333" stroke-width="1.3"/></svg></button>
            </div>
        </div>

        <div class="flex flex-1 min-h-0 pl-[1px] pr-[1px]">
            <!-- Model space -->
            <div class="relative flex-1 bg-black overflow-hidden">
                <svg class="absolute left-[278px] top-[164px] w-[43px] h-[43px]" viewBox="0 0 43 43"><path d="M21.5 0v43" stroke="#666" stroke-width="1"/><path d="M0 21.5h43" stroke="#999"/><path d="M17.5 17.5h8v8h-8z" fill="none" stroke="#e8e8e8"/></svg>
                <svg class="absolute left-0 bottom-0 w-[64px] h-[64px] font-['Liberation_Sans',sans-serif] text-[10px]" viewBox="0 0 64 64"><path d="M5.5 51.5h6v6h-6zM8.5 51V20M12 54.5h24M8.5 20l-2.5 7h5zM43 54.5l-7-2.5v5z" fill="none" stroke="#ddd"/><text x="6" y="16" fill="#ddd">Y</text><text x="48" y="59" fill="#ddd">X</text></svg>
            </div>
            <div class="flex flex-col w-[11px] bg-[#eceae6]">
                <button aria-label="向上滚动" class="flex items-center justify-center h-[11px] bg-[#d4d0c8] border border-t-white border-l-white border-r-[#505050] border-b-[#505050]"><span class="border-x-[3px] border-b-[3px] border-x-transparent border-b-black"></span></button>
                <span class="flex-1"></span>
                <span class="h-[11px] bg-[#d4d0c8] border border-t-white border-l-white border-r-[#505050] border-b-[#505050]"></span>
                <span class="flex-1"></span>
                <button aria-label="向下滚动" class="flex items-center justify-center h-[11px] bg-[#d4d0c8] border border-t-white border-l-white border-r-[#505050] border-b-[#505050]"><span class="border-x-[3px] border-t-[3px] border-x-transparent border-t-black"></span></button>
            </div>
        </div>

        <!-- Layout tabs -->
        <div class="flex h-[11px] shrink-0 pl-[1px] pr-[12px]">
            <button aria-label="第一个布局" class="flex items-center justify-center w-3 border border-t-white border-l-white border-r-[#808080] border-b-[#808080]"><svg class="w-[8px] h-[7px]" viewBox="0 0 8 7"><path d="M2 1h1v5H2zM6 1v5L3 3.5z"/></svg></button>
            <button aria-label="上一个布局" class="flex items-center justify-center w-3 border border-t-white border-l-white border-r-[#808080] border-b-[#808080]"><svg class="w-[8px] h-[7px]" viewBox="0 0 8 7"><path d="M5 1v5L2 3.5z"/></svg></button>
            <button aria-label="下一个布局" class="flex items-center justify-center w-3 border border-t-white border-l-white border-r-[#808080] border-b-[#808080]"><svg class="w-[8px] h-[7px]" viewBox="0 0 8 7"><path d="M3 1v5l3-2.5z"/></svg></button>
            <button aria-label="最后一个布局" class="flex items-center justify-center w-3 border border-t-white border-l-white border-r-[#808080] border-b-[#808080]"><svg class="w-[8px] h-[7px]" viewBox="0 0 8 7"><path d="M2 1v5l3-2.5zM5 1h1v5H5z"/></svg></button>
            <svg class="w-[6px] h-[11px] ml-[2px]" viewBox="0 0 6 11"><path d="M0 0h6v11H4z"/></svg>
            <a href="#" class="bg-black text-white">模型</a>
            <svg class="w-[6px] h-[11px]" viewBox="0 0 6 11"><path d="M0 0h6L2 11H0z"/><path d="M3 0l3 11" stroke="#000" fill="none"/></svg>
            <a href="#" class="px-[1px]">布局1</a>
            <svg class="w-[6px] h-[11px]" viewBox="0 0 6 11"><path d="M5 0L1 11M3 5l2 6" stroke="#000" fill="none"/></svg>
            <a href="#" class="px-[1px]">布局2</a>
            <svg class="w-[6px] h-[11px]" viewBox="0 0 6 11"><path d="M5 0L1 11" stroke="#000" fill="none"/></svg>
            <div class="flex w-[187px] ml-auto bg-[#eceae6]">
                <span class="w-[3px] bg-[#d4d0c8] border-x border-l-white border-r-[#505050]"></span>
                <button aria-label="向左滚动" class="flex items-center justify-center w-[11px] bg-[#d4d0c8] border border-t-white border-l-white border-r-[#505050] border-b-[#505050]"><span class="border-y-[2px] border-r-[3px] border-y-transparent border-r-black"></span></button>
                <span class="flex-1"></span>
                <span class="w-[11px] bg-[#d4d0c8] border border-t-white border-l-white border-r-[#505050] border-b-[#505050]"></span>
                <span class="flex-1"></span>
                <button aria-label="向右滚动" class="flex items-center justify-center w-[11px] bg-[#d4d0c8] border border-t-white border-l-white border-r-[#505050] border-b-[#505050]"><span class="border-y-[2px] border-l-[3px] border-y-transparent border-l-black"></span></button>
            </div>
        </div>
    </div>

    <!-- Draw order -->
    <div class="flex flex-col items-center w-[18px] ml-[1px] mr-[1px] shrink-0 self-start border-l border-l-white border-r border-b border-[#8f8b84] pt-[2px] pb-[3px]">
        <span class="w-[13px] h-[5px] mb-[1px] border-y border-[#9a968e] shadow-[inset_0_1px_0_#fff]"></span>
        <div class="flex flex-col gap-[2px]">
            <button aria-label="前置" class="flex"><svg class="w-[13px] h-[13px]" viewBox="0 0 16 16"><path d="M2 1h7v7H2z" fill="#a8c8e4" stroke="#88a8c8"/><path d="M8 8h7v7H8z" fill="#a8c8e4" stroke="#88a8c8"/><path d="M4 4h8v8H4z" fill="#3c74b0" stroke="#245488"/></svg></button>
            <button aria-label="后置" class="flex"><svg class="w-[13px] h-[13px]" viewBox="0 0 16 16"><path d="M4 4h9v8H4z" fill="#3c74b0" stroke="#245488"/><path d="M1 1h7v6H1z" fill="#c8e0f0" stroke="#6890b8"/><path d="M9 9h6v6H9z" fill="#c8e0f0" stroke="#6890b8"/></svg></button>
            <button aria-label="置于对象之上" class="flex"><svg class="w-[13px] h-[13px]" viewBox="0 0 16 16"><path d="M7 6h8v8H7z" fill="#a8c8e4" stroke="#88a8c8"/><path d="M2 2h10v9H2z" fill="#4c84bc" stroke="#1c4474" stroke-width="1.3"/></svg></button>
            <button aria-label="置于对象之下" class="flex"><svg class="w-[13px] h-[13px]" viewBox="0 0 16 16"><path d="M2 2h10v9H2z" fill="#4c84bc" stroke="#345c8c"/><path d="M7 6h8v8H7z" fill="#d8e8f4" stroke="#88a8c8"/></svg></button>
        </div>
    </div>
</main>

<!-- Command window -->
<section class="relative shrink-0 mt-[1px] border-t border-white pt-[2px] pb-[1px]">
    <div class="h-px bg-black"></div>
    <div class="flex mt-[3px] pl-[3px] pr-[5px]">
        <span class="w-[5px] mr-[3px] mt-[2px] shrink-0 border-x border-[#8f8b84] shadow-[inset_1px_0_0_#fff]"></span>
        <div class="flex-1 min-w-0 border-t-2 border-l border-black border-r border-r-white font-['Liberation_Mono','Noto_Sans_CJK_SC',monospace] text-[10px] leading-[10px]">
            <div class="flex bg-white">
                <div class="flex-1 pl-[1px] pb-[4px] text-[9px] leading-[9px]">
                    <p>命令: *取消*</p>
                    <p>命令: *取消*</p>
                    <p>命令: *取消*</p>
                    <p>命令: *取消*</p>
                    <p>命令: *取消*</p>
                    <p>命令: *取消*</p>
                </div>
                <div class="flex flex-col w-[11px] bg-[#eceae6]">
                    <button aria-label="历史向上" class="flex items-center justify-center h-[11px] bg-[#d4d0c8] border border-t-white border-l-white border-r-[#505050] border-b-[#505050]"><span class="border-x-[3px] border-b-[3px] border-x-transparent border-b-black"></span></button>
                    <span class="flex-1"></span>
                    <span class="h-[11px] bg-[#d4d0c8] border border-t-white border-l-white border-r-[#505050] border-b-[#505050]"></span>
                    <button aria-label="历史向下" class="flex items-center justify-center h-[11px] bg-[#d4d0c8] border border-t-white border-l-white border-r-[#505050] border-b-[#505050]"><span class="border-x-[3px] border-t-[3px] border-x-transparent border-t-black"></span></button>
                </div>
            </div>
            <div class="flex h-[12px] border-t border-[#707070] bg-white">
                <label for="command" class="pl-[1px] whitespace-nowrap">命令: a ARC 指定圆弧的起点或</label>
                <button class="ml-[8px] px-[4px] whitespace-nowrap bg-[#d4d0c8] border-x border-l-white border-r-[#505050]">圆心(C)</button>
                <input id="command" class="flex-1 min-w-0 outline-none">
                <div class="flex w-[42px] shrink-0 bg-[#eceae6]">
                    <button aria-label="命令行向左" class="flex items-center justify-center w-[11px] bg-[#d4d0c8] border border-t-white border-l-white border-r-[#505050] border-b-[#505050]"><span class="border-y-[2px] border-r-[3px] border-y-transparent border-r-black"></span></button>
                    <span class="w-[10px] bg-[#d4d0c8] border border-t-white border-l-white border-r-[#505050] border-b-[#505050]"></span>
                    <span class="flex-1"></span>
                    <button aria-label="命令行向右" class="flex items-center justify-center w-[11px] bg-[#d4d0c8] border border-t-white border-l-white border-r-[#505050] border-b-[#505050]"><span class="border-y-[2px] border-l-[3px] border-y-transparent border-l-black"></span></button>
                </div>
                <span class="w-[11px] shrink-0 bg-[#d4d0c8]"></span>
            </div>
        </div>
    </div>

    <!-- Callout over the command line option -->
    <svg class="absolute left-[160px] top-[9px] w-[256px] h-[78px] pointer-events-none drop-shadow-[2px_2px_1px_rgba(0,0,0,0.35)]" viewBox="0 0 256 78">
        <rect x="3" y="55" width="56" height="18" rx="16" ry="9" fill="none" stroke="#f01818" stroke-width="1.5"/>
        <rect x="181" y="5" width="66" height="26" rx="16" ry="13" fill="#fff" stroke="#f01818" stroke-width="1.5"/>
        <path d="M176 22L74 55" stroke="#f01818" stroke-width="2"/>
        <path d="M66 58l7-8 3 9z" fill="#f01818" stroke="#f01818"/>
    </svg>
    <p class="absolute left-[351px] top-[23px] text-[9px] leading-[10px] font-medium whitespace-nowrap">命令行按钮</p>
</section>

<!-- Status bar -->
<footer class="flex items-center h-[17px] shrink-0 border-t border-[#808080] pl-[3px] shadow-[inset_0_1px_0_#fff] whitespace-nowrap">
    <output class="w-[169px] h-[12px] mr-[2px] shrink-0 border border-t-[#808080] border-l-[#808080] border-r-white border-b-white font-['Liberation_Mono',monospace] text-[7px]">236.0023, 106.3806, 0.0000</output>
    <div class="flex gap-[2px]">
        <button class="h-[13px] px-[1px] border border-t-white border-l-white border-r-[#808080] border-b-[#808080]">捕捉</button>
        <button class="h-[13px] px-[1px] border border-t-white border-l-white border-r-[#808080] border-b-[#808080]">栅格</button>
        <button class="h-[13px] px-[1px] border border-t-white border-l-white border-r-[#808080] border-b-[#808080]">正交</button>
        <button class="h-[13px] px-[1px] border border-t-white border-l-white border-r-[#808080] border-b-[#808080]">极轴</button>
        <button class="h-[13px] px-[1px] bg-[#e2dfd9] border border-t-[#606060] border-l-[#606060] border-r-white border-b-white">对象捕捉</button>
        <button class="h-[13px] px-[1px] bg-[#e2dfd9] border border-t-[#606060] border-l-[#606060] border-r-white border-b-white">对象追踪</button>
        <button class="h-[13px] px-[1px] border border-t-white border-l-white border-r-[#808080] border-b-[#808080]">线宽</button>
        <button class="h-[13px] px-[1px] bg-[#e2dfd9] border border-t-[#606060] border-l-[#606060] border-r-white border-b-white">模型</button>
    </div>
    <div class="flex items-center ml-auto">
        <button aria-label="通讯中心" class="flex items-center justify-center w-4 h-[13px] mr-[3px] border border-t-[#808080] border-l-[#808080] border-r-white border-b-white"><svg class="w-[11px] h-[11px]" viewBox="0 0 16 16"><ellipse cx="7" cy="6" rx="5" ry="4.5" fill="#90a8d4" stroke="#3c5490" stroke-width="1.3"/><path d="M3 3l8 7M12 2l-4 5M7 10l-3 5h8l-3-5" fill="#c8d4ec" stroke="#3c5490" stroke-width="1.3"/></svg></button>
        <button aria-label="状态栏菜单" class="w-[6px] border-x-[3px] border-t-[3px] border-x-transparent border-t-black"></button>
        <svg class="w-[11px] h-[11px] ml-[2px]" viewBox="0 0 11 11"><path d="M2 11l9-9M6 11l5-5M10 11l1-1" stroke="#808080" stroke-width="1.3"/></svg>
    </div>
</footer>
</body>
</html>
